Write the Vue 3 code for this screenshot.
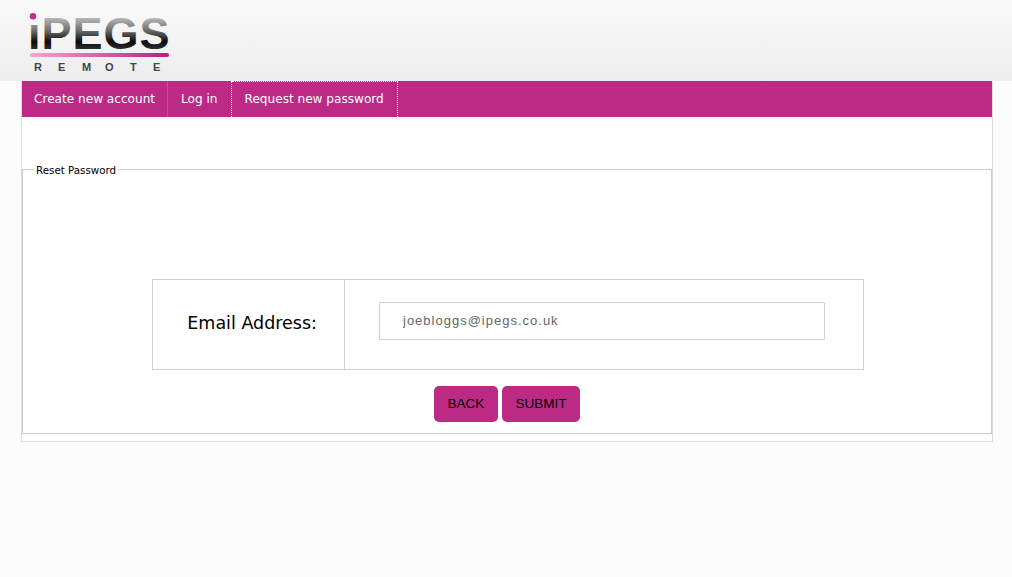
<script setup>
const links = ['Create new account', 'Log in', 'Request new password']
</script>

<template>
  <div class="page">
    <header class="top">
      <svg class="logo" width="141" height="81" viewBox="0 -12 141 81">
        <defs>
          <linearGradient id="chrome" gradientUnits="userSpaceOnUse" x1="0" y1="5" x2="0" y2="38">
            <stop offset="0" stop-color="#bdbdbd" />
            <stop offset="0.4" stop-color="#707070" />
            <stop offset="0.75" stop-color="#0a0a0a" />
            <stop offset="1" stop-color="#333" />
          </linearGradient>
          <linearGradient id="rule" x1="0" y1="0" x2="1" y2="0">
            <stop offset="0" stop-color="#f3a6cf" />
            <stop offset="1" stop-color="#bb1d84" />
          </linearGradient>
          <clipPath id="no-dot">
            <rect x="-2" y="11" width="18" height="30" />
          </clipPath>
        </defs>
        <text x="-1" y="37" class="logo-main" fill="url(#chrome)" clip-path="url(#no-dot)">i</text>
        <text x="12.5" y="37" class="logo-main" fill="url(#chrome)">PEGS</text>
        <circle cx="4" cy="4.2" r="3.2" fill="#c42b8d" />
        <rect x="1" y="41" width="139" height="4" rx="2" fill="url(#rule)" />
        <text x="5 29 53 76 101 124" y="59" class="logo-sub">REMOTE</text>
      </svg>
    </header>
    <main class="wrap">
      <nav class="nav">
        <a v-for="(link, i) in links" :key="link" class="nav-link" :class="{ active: i === 2 }">{{ link }}</a>
      </nav>
      <fieldset class="box">
        <legend>Reset Password</legend>
        <table class="form-table">
          <tbody>
            <tr>
              <th>Email Address:</th>
              <td><input class="field" type="text" placeholder="joebloggs@ipegs.co.uk" /></td>
            </tr>
          </tbody>
        </table>
        <div class="actions">
          <button class="btn back" type="button">BACK</button>
          <button class="btn submit" type="button">SUBMIT</button>
        </div>
      </fieldset>
    </main>
  </div>
</template>

<style>
html, body { margin: 0; background: #fcfcfc; }
</style>

<style scoped>
.page {
  min-height: 577px;
  background: #fcfcfc;
  font-family: "DejaVu Sans", Verdana, sans-serif;
}
.top {
  height: 81px;
  box-sizing: border-box;
  padding-left: 29px;
  background: linear-gradient(#fafafa, #ededed);
  overflow: hidden;
}
.logo { display: block; }
.logo-main {
  font-family: "Liberation Sans", Arial, sans-serif;
  font-weight: 700;
  font-size: 45px;
  letter-spacing: 1px;
}
.logo-sub {
  font-family: "Liberation Sans", Arial, sans-serif;
  font-weight: 700;
  font-size: 11px;
  fill: #444;
}
.wrap {
  width: 972px;
  margin-left: 21px;
  box-sizing: border-box;
  background: #fff;
  border: 1px solid #ddd;
  border-top: 0;
  padding-bottom: 7px;
}
.nav {
  display: flex;
  height: 36px;
  background: #bc2a86;
  margin-bottom: 45px;
}
.nav-link {
  padding: 0 13px;
  line-height: 36px;
  font-size: 12.1px;
  color: #fff;
  border-right: 1px solid #cb4b9b;
}
.nav-link:first-child { padding: 0 12px; }
.nav-link:nth-child(2) { border-right: 1px dotted #fff; }
.nav-link.active {
  border-right: 1px dotted #fff;
  border-top: 1px dotted #fff;
  line-height: 35px;
}
.box {
  margin: 0;
  padding: 0 0 11px;
  border: 1px solid #ccc;
  min-width: 0;
}
legend {
  margin-left: 11px;
  padding: 2px 2px 0;
  font-size: 10.3px;
  line-height: 12px;
  color: #000;
}
.form-table {
  width: 712px;
  height: 91px;
  margin: 103px 0 0 129px;
  border-collapse: collapse;
}
.form-table th,
.form-table td {
  border: 1px solid #d2d2d2;
  padding: 0;
}
.form-table th {
  width: 192px;
  padding: 0 27px 4px 0;
  box-sizing: border-box;
  text-align: right;
  font-weight: 400;
  font-size: 17.5px;
  color: #000;
}
.form-table td { padding: 0 0 8px 34px; }
.field {
  display: block;
  width: 446px;
  height: 38px;
  box-sizing: border-box;
  margin: 0;
  padding: 0 23px;
  border: 1px solid #d2d2d2;
  border-radius: 1px;
  background: #fff;
  font-family: "Liberation Sans", Arial, sans-serif;
  font-size: 13px;
  letter-spacing: 1px;
  outline: none;
}
.field::placeholder { color: #666; opacity: 1; }
.actions {
  display: flex;
  gap: 4px;
  margin: 16px 0 0 411px;
}
.btn {
  height: 36px;
  padding: 0 0 2px;
  border: 0;
  border-radius: 5px;
  background: #bc2a86;
  color: #000;
  font-family: "Liberation Sans", Arial, sans-serif;
  font-size: 13.5px;
}
.back { width: 64px; }
.submit { width: 78px; }
</style>
